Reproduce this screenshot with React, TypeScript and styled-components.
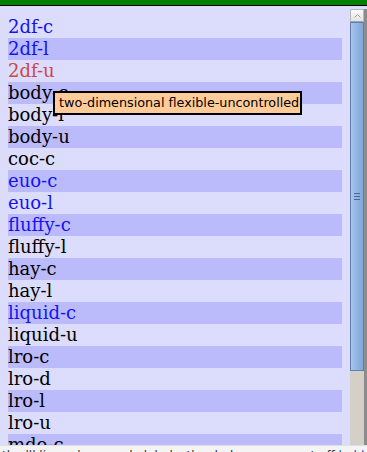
import styled, { createGlobalStyle } from "styled-components";

const Global = createGlobalStyle`
  html, body {
    margin: 0;
    padding: 0;
    overflow: hidden;
  }
`;

const Frame = styled.div`
  width: 367px;
  height: 452px;
  display: flex;
  flex-direction: column;
  overflow: hidden;
  position: relative;
`;

const TopBar = styled.div`
  height: 5px;
  background: #008000;
  border-bottom: 1px solid #000;
  flex: none;
`;

const Main = styled.div`
  flex: 1;
  min-height: 0;
  display: flex;
  background: #dcdcfc;
  overflow: hidden;
`;

const List = styled.div`
  width: 334px;
  padding: 10px 0 0 8px;
  display: flex;
  flex-direction: column;
  flex: none;
`;

const Row = styled.div<{ $hl: boolean; $tone: "blue" | "red" | "black" }>`
  height: 22px;
  line-height: 22px;
  flex: none;
  font-family: "DejaVu Serif", serif;
  font-size: 18px;
  background: ${({ $hl }) => ($hl ? "#bbbbfc" : "transparent")};
  color: ${({ $tone }) =>
    $tone === "blue" ? "#1414f0" : $tone === "red" ? "#cc4848" : "#000"};
`;

const Scroll = styled.div`
  margin-left: 8px;
  margin-top: 3px;
  width: 17px;
  display: flex;
  flex: none;
`;

const Track = styled.div`
  width: 14px;
  display: flex;
  flex-direction: column;
  background: #d4d0c8;
`;

const ArrowBtn = styled.div`
  height: 13px;
  border: 1px solid #b8b8b8;
  border-bottom-color: #9aa6b8;
  border-radius: 2px 2px 0 0;
  background: linear-gradient(#fbfbfb, #e4e4e4);
  display: flex;
  align-items: center;
  justify-content: center;
  box-sizing: border-box;
`;

const Thumb = styled.div`
  height: 349px;
  box-sizing: border-box;
  border: 1px solid #5f7fb3;
  background: linear-gradient(90deg, #a9c4ea, #8db2e2 60%, #80a6da);
  display: flex;
  align-items: center;
  justify-content: center;
`;

const Edge = styled.div`
  width: 3px;
  background: #8c8c8c;
`;

const StatusBar = styled.div`
  height: 6px;
  flex: none;
  background: #f4f4f4;
  border-top: 1px solid #e0e0e0;
  overflow: hidden;
  font-family: "DejaVu Sans", sans-serif;
  font-size: 12px;
  line-height: 20px;
  color: #333;
  padding-left: 2px;
  white-space: nowrap;
`;

const Link = styled.span<{ $c: string }>`
  color: ${({ $c }) => $c};
`;

const Tip = styled.div`
  position: absolute;
  left: 53px;
  top: 91px;
  width: 249px;
  height: 24px;
  box-sizing: border-box;
  border: 2px solid #000;
  background: #ffcc99;
  font-family: "DejaVu Sans", sans-serif;
  font-size: 12.75px;
  line-height: 20px;
  padding-left: 4px;
  color: #000;
  white-space: nowrap;
`;

const items: Array<[string, "blue" | "red" | "black"]> = [
  ["2df-c", "blue"],
  ["2df-l", "blue"],
  ["2df-u", "red"],
  ["body-c", "black"],
  ["body-l", "black"],
  ["body-u", "black"],
  ["coc-c", "black"],
  ["euo-c", "blue"],
  ["euo-l", "blue"],
  ["fluffy-c", "blue"],
  ["fluffy-l", "black"],
  ["hay-c", "black"],
  ["hay-l", "black"],
  ["liquid-c", "blue"],
  ["liquid-u", "black"],
  ["lro-c", "black"],
  ["lro-d", "black"],
  ["lro-l", "black"],
  ["lro-u", "black"],
  ["mdo-c", "black"],
];

export default function App() {
  return (
    <Frame>
      <Global />
      <TopBar />
      <Main>
        <List>
          {items.map(([name, tone], i) => (
            <Row key={name} $hl={i % 2 === 1} $tone={tone}>
              {name}
            </Row>
          ))}
        </List>
        <Scroll>
          <Track>
            <ArrowBtn>
              <svg width="7" height="4" viewBox="0 0 7 4">
                <path d="M0.5 3.5 L3.5 0.5 L6.5 3.5" fill="none" stroke="#9a9a9a" strokeWidth="1" />
              </svg>
            </ArrowBtn>
            <Thumb>
              <svg width="6" height="7" viewBox="0 0 6 7">
                <path d="M0 0.5 H6 M0 3.5 H6 M0 6.5 H6" stroke="#4a6696" strokeWidth="1" />
              </svg>
            </Thumb>
          </Track>
          <Edge />
        </Scroll>
      </Main>
      <StatusBar>
        the lll lines show mode labels, the dark ones are cut off{" "}
        <Link $c="#2a4fc0">hold</Link> <Link $c="#c03030">b</Link> list
        fold link ul blb
      </StatusBar>
      <Tip>two-dimensional flexible-uncontrolled</Tip>
    </Frame>
  );
}
